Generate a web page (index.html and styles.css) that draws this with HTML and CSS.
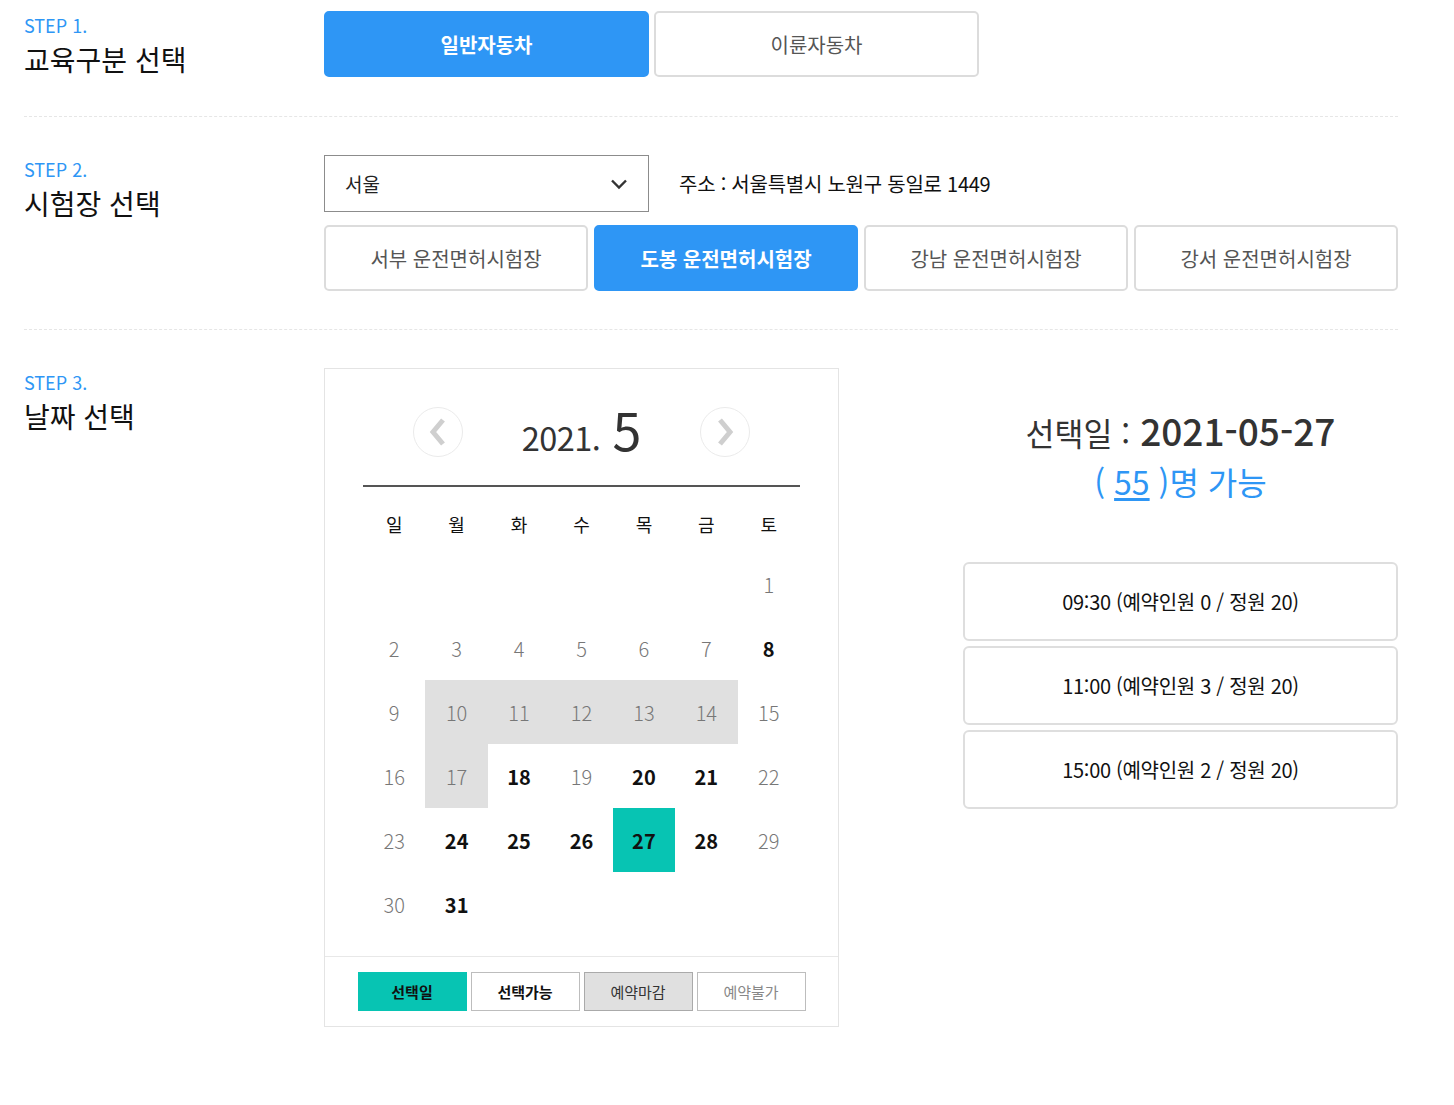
FILE: index.html
```html
<!DOCTYPE html>
<html lang="ko">
<head>
<meta charset="utf-8">
<title>시험 예약</title>
<link rel="stylesheet" href="styles.css">
</head>
<body>
<div class="page">
  <section class="step step-first">
    <div class="step-label">
      <div class="step-num">STEP 1.</div>
      <div class="step-title">교육구분 선택</div>
    </div>
    <div class="step-body">
      <div class="type-row">
        <button class="btn btn-type active">일반자동차</button>
        <button class="btn btn-type">이륜자동차</button>
      </div>
    </div>
  </section>

  <section class="step">
    <div class="step-label">
      <div class="step-num">STEP 2.</div>
      <div class="step-title">시험장 선택</div>
    </div>
    <div class="step-body">
      <div class="region-row">
        <div class="select">
          <span>서울</span>
          <svg class="chev" width="18" height="12" viewBox="0 0 18 12"><path d="M2 2.5 L9 9.5 L16 2.5" fill="none" stroke="#333" stroke-width="2.4"/></svg>
        </div>
        <div class="address">주소 : 서울특별시 노원구 동일로 1449</div>
      </div>
      <div class="center-row">
        <button class="btn btn-center">서부 운전면허시험장</button>
        <button class="btn btn-center active">도봉 운전면허시험장</button>
        <button class="btn btn-center">강남 운전면허시험장</button>
        <button class="btn btn-center">강서 운전면허시험장</button>
      </div>
    </div>
  </section>

  <section class="step step-last">
    <div class="step-label">
      <div class="step-num">STEP 3.</div>
      <div class="step-title">날짜 선택</div>
    </div>
    <div class="step-body date-body">
      <div class="calendar">
        <div class="cal-inner">
          <div class="cal-head">
            <span class="nav-btn">
              <svg width="20" height="32" viewBox="0 0 20 32"><path d="M15 4 L5 16 L15 28" fill="none" stroke="#cfcfcf" stroke-width="5"/></svg>
            </span>
            <div class="cal-title"><span class="year">2021.</span><span class="month">5</span></div>
            <span class="nav-btn">
              <svg width="20" height="32" viewBox="0 0 20 32"><path d="M5 4 L15 16 L5 28" fill="none" stroke="#cfcfcf" stroke-width="5"/></svg>
            </span>
          </div>
          <div class="weekdays">
            <span>일</span><span>월</span><span>화</span><span>수</span><span>목</span><span>금</span><span>토</span>
          </div>
          <div class="days">
            <span></span><span></span><span></span><span></span><span></span><span></span><span class="d off">1</span>
            <span class="d off">2</span><span class="d off">3</span><span class="d off">4</span><span class="d off">5</span><span class="d off">6</span><span class="d off">7</span><span class="d on">8</span>
            <span class="d off">9</span><span class="d full">10</span><span class="d full">11</span><span class="d full">12</span><span class="d full">13</span><span class="d full">14</span><span class="d off">15</span>
            <span class="d off">16</span><span class="d full">17</span><span class="d on">18</span><span class="d off">19</span><span class="d on">20</span><span class="d on">21</span><span class="d off">22</span>
            <span class="d off">23</span><span class="d on">24</span><span class="d on">25</span><span class="d on">26</span><span class="d sel">27</span><span class="d on">28</span><span class="d off">29</span>
            <span class="d off">30</span><span class="d on">31</span><span></span><span></span><span></span><span></span><span></span>
          </div>
        </div>
        <div class="legend">
          <span class="lg lg-sel">선택일</span>
          <span class="lg lg-on">선택가능</span>
          <span class="lg lg-full">예약마감</span>
          <span class="lg lg-off">예약불가</span>
        </div>
      </div>
      <div class="detail">
        <div class="sel-date"><span class="sel-label">선택일 :</span><span class="sel-value">2021-05-27</span></div>
        <div class="avail">( <a href="#" class="avail-num">55</a> )명 가능</div>
        <div class="slots">
          <button class="slot">09:30 (예약인원 0 / 정원 20)</button>
          <button class="slot">11:00 (예약인원 3 / 정원 20)</button>
          <button class="slot">15:00 (예약인원 2 / 정원 20)</button>
        </div>
      </div>
    </div>
  </section>
</div>
</body>
</html>
```
FILE: styles.css
```css
* { box-sizing: border-box; }
html, body { margin: 0; padding: 0; background: #fff; }
body {
  font-family: "Noto Sans CJK KR", "Noto Sans", sans-serif;
  color: #111;
}
.page {
  width: 1374px;
  margin-left: 24px;
}
.step {
  display: flex;
  align-items: flex-start;
  padding: 38px 0 38px;
  border-bottom: 1px dashed #e6e6e6;
}
.step-first { padding-top: 11px; padding-bottom: 39px; }
.step-last { border-bottom: none; padding-top: 38px; }
.step-label {
  width: 300px;
  flex: none;
  padding-top: 2px;
}
.step-num {
  color: #2e96f5;
  font-size: 18px;
  line-height: 24px;
}
.step-title {
  font-size: 28px;
  line-height: 36px;
  margin-top: 4px;
  color: #111;
}
.step-body { flex: 1; }

.btn {
  font-family: inherit;
  background: #fff;
  border: 2px solid #dcdcdc;
  border-radius: 5px;
  color: #555;
  font-size: 20px;
  cursor: pointer;
  padding: 0;
}
.btn.active {
  background: #2e96f5;
  border-color: #2e96f5;
  color: #fff;
  font-weight: 700;
}
.type-row { display: flex; gap: 5px; }
.btn-type { width: 325px; height: 66px; }

.region-row { display: flex; align-items: center; }
.select {
  width: 325px;
  height: 57px;
  border: 1px solid #8c8c8c;
  display: flex;
  align-items: center;
  justify-content: space-between;
  padding: 0 20px 0 20px;
  font-size: 19px;
  color: #222;
}
.address {
  margin-left: 30px;
  font-size: 20px;
  color: #111;
  letter-spacing: -0.25px;
}
.center-row {
  display: flex;
  gap: 6px;
  margin-top: 13px;
}
.btn-center { width: 264px; height: 66px; }

.date-body { display: flex; justify-content: space-between; }
.calendar {
  width: 515px;
  border: 1px solid #e4e4e4;
}
.cal-inner { padding: 38px 38px 20px 38px; }
.cal-head {
  display: flex;
  align-items: center;
  justify-content: space-between;
  padding: 0 50px;
  height: 50px;
  margin-bottom: 28px;
}
.nav-btn {
  width: 50px;
  height: 50px;
  border-radius: 50%;
  border: 1px solid #ebebeb;
  display: flex;
  align-items: center;
  justify-content: center;
}
.cal-title {
  color: #333;
  display: flex;
  align-items: baseline;
  gap: 12px;
  margin-left: 0;
}
.year { font-size: 32.5px; letter-spacing: -0.5px; }
.month { font-size: 52px; line-height: 50px; }
.weekdays {
  border-top: 2px solid #555;
  display: grid;
  grid-template-columns: repeat(7, 1fr);
  padding-top: 10px;
}
.weekdays span {
  text-align: center;
  height: 55px;
  line-height: 55px;
  font-size: 18px;
  color: #111;
}
.days {
  display: grid;
  grid-template-columns: repeat(7, 1fr);
  grid-auto-rows: 64px;
}
.d {
  display: flex;
  align-items: center;
  justify-content: center;
  font-size: 20px;
}
.d.off { color: #777; font-weight: 300; }
.d.on { color: #111; font-weight: 700; }
.d.full { background: #e0e0e0; color: #777; font-weight: 300; }
.d.sel { background: #07c4b3; color: #111; font-weight: 700; }

.legend {
  border-top: 1px solid #e8e8e8;
  padding: 15px 0 15px;
  display: flex;
  justify-content: center;
  gap: 4px;
}
.lg {
  width: 109px;
  height: 39px;
  display: flex;
  align-items: center;
  justify-content: center;
  font-size: 15px;
  border: 1px solid #bdbdbd;
  background: #fff;
}
.lg-sel { background: #07c4b3; border-color: #07c4b3; color: #111; font-weight: 700; }
.lg-on { color: #111; font-weight: 700; }
.lg-full { background: #e0e0e0; border-color: #aaa; color: #333; }
.lg-off { color: #888; }

.detail {
  width: 435px;
  padding-top: 37px;
  text-align: center;
}
.sel-date { line-height: 50px; color: #333; font-size: 37px; }
.sel-label { font-size: 31.5px; margin-right: 10px; }
.sel-value { font-size: 37px; font-weight: 500; }
.avail {
  font-size: 32px;
  line-height: 48px;
  color: #2e96f5;
}
.avail-num { color: #2e96f5; text-decoration: underline; text-underline-offset: 3px; }
.slots {
  margin-top: 57px;
  display: flex;
  flex-direction: column;
  gap: 5px;
}
.slot {
  font-family: inherit;
  height: 79px;
  width: 100%;
  background: #fff;
  border: 2px solid #dedede;
  border-radius: 6px;
  font-size: 20px;
  color: #111;
  letter-spacing: -0.3px;
}
```
